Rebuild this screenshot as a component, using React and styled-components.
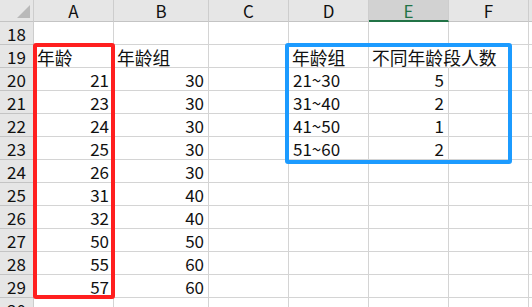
import React from "react";
import styled, { createGlobalStyle } from "styled-components";

const GlobalStyle = createGlobalStyle`
  html, body { margin: 0; padding: 0; background: #fff; overflow: hidden; }
`;

const Sheet = styled.div`
  position: relative;
  width: 532px;
  height: 307px;
  overflow: hidden;
  display: grid;
  grid-template-columns: 34px 80px 95px 80px 80px 80px 80px 1fr;
  grid-template-rows: 22px;
  grid-auto-rows: 23px;
  font-family: "Noto Sans CJK SC", "Noto Sans", sans-serif;
  font-size: 16px;
  color: #111;
`;

const HeaderBase = styled.div`
  box-sizing: border-box;
  background: #e6e6e6;
  border-right: 1px solid #cdcdcd;
  border-bottom: 1px solid #c4c4c4;
  display: flex;
  align-items: center;
  justify-content: center;
  line-height: 20px;
  font-size: 17px;
`;

const Corner = styled(HeaderBase)`
  position: relative;
  &::after {
    content: "";
    position: absolute;
    right: 3px;
    bottom: 3px;
    width: 0;
    height: 0;
    border-left: 13px solid transparent;
    border-bottom: 13px solid #b9b9b9;
  }
`;

const ColHeader = styled(HeaderBase)`
  background: ${(p) => (p.$active ? "#d2d2d2" : "#e6e6e6")};
  color: ${(p) => (p.$active ? "#217346" : "#111")};
  border-bottom: ${(p) => (p.$active ? "2px solid #217346" : "1px solid #c4c4c4")};
  padding-top: ${(p) => (p.$active ? "1px" : "0")};
`;

const RowHeader = styled(HeaderBase)`
  padding-top: 1px;
`;

const Cell = styled.div`
  box-sizing: border-box;
  border-right: 1px solid ${(p) => (p.$open ? "transparent" : "#d4d4d4")};
  border-bottom: 1px solid #d4d4d4;
  display: flex;
  align-items: center;
  justify-content: ${(p) => (p.$num ? "flex-end" : "flex-start")};
  padding: 1px 4px 0 ${(p) => (p.$cjk ? "3px" : "4px")};
  white-space: nowrap;
  line-height: 20px;
  font-size: ${(p) => (p.$cjk ? "17.8px" : "17px")};
  min-width: 0;
  overflow: visible;
`;

const Outline = styled.div`
  position: absolute;
  box-sizing: border-box;
  border: 4px solid ${(p) => p.$color};
  border-radius: 3px;
  pointer-events: none;
`;

const cols = ["A", "B", "C", "D", "E", "F", ""];

const rows = [
  [18, ["", "", "", "", "", "", ""]],
  [19, ["年龄", "年龄组", "", "年龄组", "不同年龄段人数", "", ""]],
  [20, ["21", "30", "", "21~30", "5", "", ""]],
  [21, ["23", "30", "", "31~40", "2", "", ""]],
  [22, ["24", "30", "", "41~50", "1", "", ""]],
  [23, ["25", "30", "", "51~60", "2", "", ""]],
  [24, ["26", "30", "", "", "", "", ""]],
  [25, ["31", "40", "", "", "", "", ""]],
  [26, ["32", "40", "", "", "", "", ""]],
  [27, ["50", "50", "", "", "", "", ""]],
  [28, ["55", "60", "", "", "", "", ""]],
  [29, ["57", "60", "", "", "", "", ""]],
  [30, ["", "", "", "", "", "", ""]],
];

const isNum = (v) => /^\d+$/.test(v);
const isCjk = (v) => /[\u4e00-\u9fff]/.test(v);

export default function App() {
  return (
    <>
      <GlobalStyle />
      <Sheet>
        <Corner />
        {cols.map((c, i) => (
          <ColHeader key={"h" + i} $active={c === "E"}>
            {c}
          </ColHeader>
        ))}
        {rows.map(([n, cells]) => (
          <React.Fragment key={n}>
            <RowHeader>{n}</RowHeader>
            {cells.map((v, i) => (
              <Cell
                key={i}
                $num={isNum(v)}
                $cjk={isCjk(v)}
                $open={n === 19 && i === 4}
              >
                {v}
              </Cell>
            ))}
          </React.Fragment>
        ))}
        <Outline
          $color="#ff1f1f"
          style={{ left: 33, top: 43, width: 82, height: 256 }}
        />
        <Outline
          $color="#1c9bff"
          style={{ left: 285, top: 43, width: 227, height: 121 }}
        />
      </Sheet>
    </>
  );
}
